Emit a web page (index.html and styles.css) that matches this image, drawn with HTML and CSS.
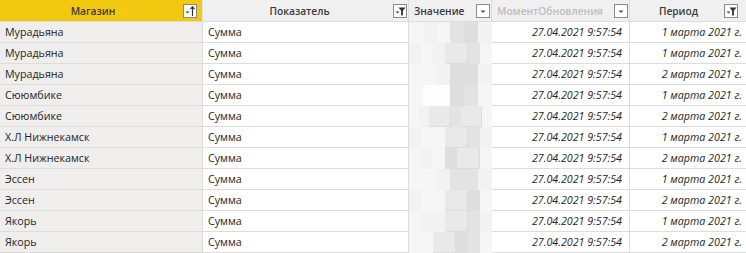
FILE: index.html
```html
<!DOCTYPE html>
<html lang="ru">
<head>
<meta charset="utf-8">
<link rel="stylesheet" href="styles.css">
</head>
<body>
<div class="table">
  <div class="hd hd-yellow"><span class="ht center">Магазин</span>
    <span class="ico"><svg width="14" height="14" viewBox="0 0 14 14"><rect x="0.5" y="0.5" width="13" height="13" fill="#fff" stroke="#8a8a8a"/><path d="M2.5 7.5h4l-2 2z" fill="#444"/><path d="M9.5 12V3M7.5 5l2-2.2 2 2.2" stroke="#333" stroke-width="1.2" fill="none"/></svg></span></div>
  <div class="hd"><span class="ht center">Показатель</span>
    <span class="ico"><svg width="14" height="14" viewBox="0 0 14 14"><rect x="0.5" y="0.5" width="13" height="13" fill="#fff" stroke="#8a8a8a"/><path d="M2.5 7.5h4l-2 2z" fill="#444"/><path d="M5.5 3.5h7l-2.6 3.2v4.8h-1.8v-4.8z" fill="#333"/></svg></span></div>
  <div class="hd"><span class="ht left">Значение</span>
    <span class="ico"><svg width="14" height="14" viewBox="0 0 14 14"><rect x="0.5" y="0.5" width="13" height="13" fill="#fff" stroke="#8a8a8a"/><path d="M4.5 6.5h5l-2.5 2.5z" fill="#555"/></svg></span></div>
  <div class="hd"><span class="ht left dim">МоментОбновления</span>
    <span class="ico"><svg width="14" height="14" viewBox="0 0 14 14"><rect x="0.5" y="0.5" width="13" height="13" fill="#fff" stroke="#8a8a8a"/><path d="M4.5 6.5h5l-2.5 2.5z" fill="#555"/></svg></span></div>
  <div class="hd last"><span class="ht center">Период</span>
    <span class="ico"><svg width="14" height="14" viewBox="0 0 14 14"><rect x="0.5" y="0.5" width="13" height="13" fill="#fff" stroke="#8a8a8a"/><path d="M2.5 7.5h4l-2 2z" fill="#444"/><path d="M5.5 3.5h7l-2.6 3.2v4.8h-1.8v-4.8z" fill="#333"/></svg></span></div>

  <div class="c c1">Мурадьяна</div><div class="c c2">Сумма</div><div class="c c3"><i class="p a"></i><i class="p b"></i><i class="p a"></i><i class="p d"></i><i class="p e"></i><i class="p b"></i></div><div class="c c4">27.04.2021 9:57:54</div><div class="c c5">1 марта 2021 г.</div>
  <div class="c c1">Мурадьяна</div><div class="c c2">Сумма</div><div class="c c3"><i class="p b"></i><i class="p a"></i><i class="p b"></i><i class="p c"></i><i class="p d"></i><i class="p a"></i></div><div class="c c4">27.04.2021 9:57:54</div><div class="c c5">1 марта 2021 г.</div>
  <div class="c c1">Мурадьяна</div><div class="c c2">Сумма</div><div class="c c3"><i class="p a"></i><i class="p a"></i><i class="p b"></i><i class="p e"></i><i class="p e"></i><i class="p b"></i></div><div class="c c4">27.04.2021 9:57:54</div><div class="c c5">2 марта 2021 г.</div>
  <div class="c c1">Сююмбике</div><div class="c c2">Сумма</div><div class="c c3"><i class="p a"></i><i class="p w"></i><i class="p w"></i><i class="p e"></i><i class="p d"></i><i class="p a"></i></div><div class="c c4">27.04.2021 9:57:54</div><div class="c c5">1 марта 2021 г.</div>
  <div class="c c1">Сююмбике</div><div class="c c2">Сумма</div><div class="c c3"><i class="p a"></i><i class="p b"></i><i class="p c"></i><i class="p d"></i><i class="p c"></i><i class="p a"></i></div><div class="c c4">27.04.2021 9:57:54</div><div class="c c5">2 марта 2021 г.</div>
  <div class="c c1">Х.Л Нижнекамск</div><div class="c c2">Сумма</div><div class="c c3"><i class="p b"></i><i class="p a"></i><i class="p a"></i><i class="p c"></i><i class="p d"></i><i class="p b"></i></div><div class="c c4">27.04.2021 9:57:54</div><div class="c c5">1 марта 2021 г.</div>
  <div class="c c1">Х.Л Нижнекамск</div><div class="c c2">Сумма</div><div class="c c3"><i class="p a"></i><i class="p b"></i><i class="p a"></i><i class="p e"></i><i class="p c"></i><i class="p a"></i></div><div class="c c4">27.04.2021 9:57:54</div><div class="c c5">2 марта 2021 г.</div>
  <div class="c c1">Эссен</div><div class="c c2">Сумма</div><div class="c c3"><i class="p a"></i><i class="p a"></i><i class="p b"></i><i class="p d"></i><i class="p d"></i><i class="p b"></i></div><div class="c c4">27.04.2021 9:57:54</div><div class="c c5">1 марта 2021 г.</div>
  <div class="c c1">Эссен</div><div class="c c2">Сумма</div><div class="c c3"><i class="p b"></i><i class="p a"></i><i class="p a"></i><i class="p c"></i><i class="p e"></i><i class="p a"></i></div><div class="c c4">27.04.2021 9:57:54</div><div class="c c5">2 марта 2021 г.</div>
  <div class="c c1">Якорь</div><div class="c c2">Сумма</div><div class="c c3"><i class="p a"></i><i class="p b"></i><i class="p b"></i><i class="p c"></i><i class="p d"></i><i class="p b"></i></div><div class="c c4">27.04.2021 9:57:54</div><div class="c c5">1 марта 2021 г.</div>
  <div class="c c1">Якорь</div><div class="c c2">Сумма</div><div class="c c3"><i class="p a"></i><i class="p a"></i><i class="p c"></i><i class="p e"></i><i class="p d"></i><i class="p a"></i></div><div class="c c4">27.04.2021 9:57:54</div><div class="c c5">2 марта 2021 г.</div>
</div>
</body>
</html>
```
FILE: styles.css
```css
* { box-sizing: border-box; }
html, body { margin: 0; padding: 0; background: #fff; }
body {
  font-family: "Open Sans", "Noto Sans", sans-serif;
  font-size: 10.7px;
  color: #252423;
  width: 746px;
  height: 253px;
  overflow: hidden;
}
.table {
  display: grid;
  grid-template-columns: 203px 206px 83px 138px 116px;
  grid-auto-rows: 21px;
  grid-template-rows: 22px;
}
.hd {
  display: flex;
  align-items: center;
  background: #f0f0f0;
  border-right: 1px solid #dcdcdc;
  border-bottom: 1px solid #dcdcdc;
  padding: 0 1px 0 5px;
  font-size: 10.2px;
  font-weight: 600;
  color: #3a3a3a;
}
.hd.last { border-right: none; padding-right: 8px; }
.hd-yellow { background: #f2c811; border-right-color: #e8e8e8; padding-right: 5px; }
.ht { flex: 1; white-space: nowrap; overflow: hidden; }
.ht.center { text-align: center; }
.ht.left { text-align: left; }
.ht.dim { color: #bdbdbd; }
.ico { display: flex; width: 14px; height: 14px; margin-left: 2px; flex: none; }
.c {
  display: flex;
  align-items: center;
  padding: 0 5px;
  border-right: 1px solid #dcdcdc;
  border-bottom: 1px solid #dcdcdc;
  white-space: nowrap;
  overflow: hidden;
}
.c1 { background: #efeeed; }
.c2 { background: #fff; }
.c3 { padding: 0; border: none; display: flex; align-items: stretch; }
.c4, .c5 { justify-content: flex-end; font-style: italic; padding-right: 7px; }
.c5 { border-right: none; padding-right: 4px; }
.p { display: block; flex: 1; }
.p.w { background: #fdfdfd; }
.p.a { background: #f6f6f6; }
.p.b { background: #f2f2f2; }
.p.c { background: #e9e9e9; }
.p.d { background: #e3e3e3; }
.p.e { background: #dedede; }
```
